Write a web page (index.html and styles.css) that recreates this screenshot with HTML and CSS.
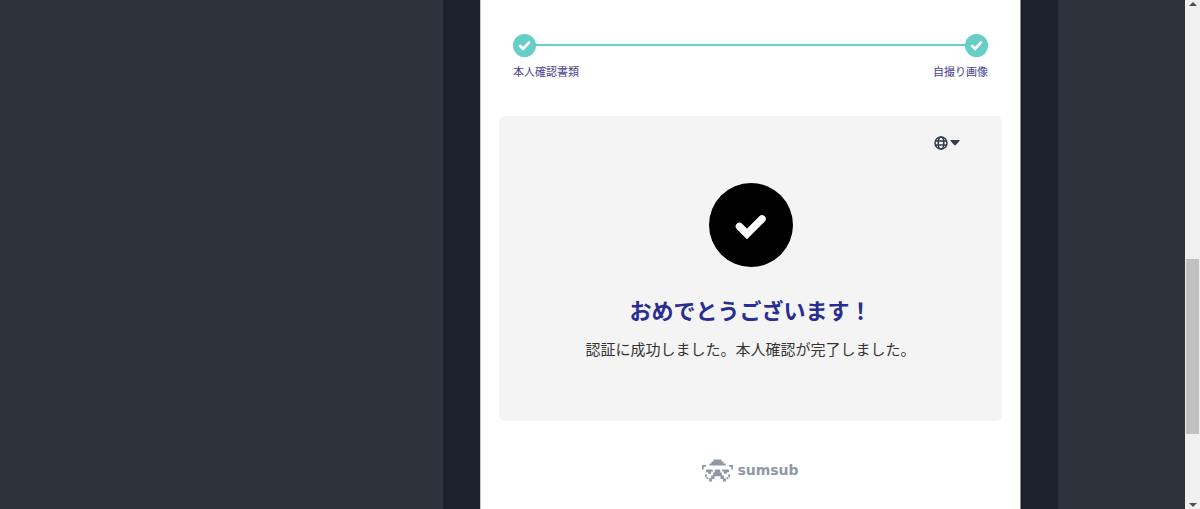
FILE: index.html
```html
<!DOCTYPE html>
<html lang="ja">

<head>
    <meta charset="UTF-8">
    <meta name="viewport" content="width=device-width, initial-scale=1.0">
    <title>本人確認</title>
    <link rel="stylesheet" href="styles.css">
</head>

<body>
    <div class="page">
        <div class="frame">
            <main class="panel">
                <ol class="steps">
                    <li>
                        <svg class="dot" viewBox="0 0 24 24">
                            <circle cx="12" cy="12" r="12" />
                            <path d="M7.500 12.500l3 3 6-6.500" />
                        </svg>
                        <span>本人確認書類</span>
                    </li>
                    <li>
                        <svg class="dot" viewBox="0 0 24 24">
                            <circle cx="12" cy="12" r="12" />
                            <path d="M7.500 12.500l3 3 6-6.500" />
                        </svg>
                        <span>自撮り画像</span>
                    </li>
                </ol>

                <section class="card">
                    <button class="lang" type="button" aria-label="言語">
                        <svg class="globe" viewBox="0 0 14 14">
                            <circle cx="7" cy="7" r="6" />
                            <ellipse cx="7" cy="7" rx="2.800" ry="6" />
                            <path d="M1.300 5h11.400M1.300 9h11.400" />
                        </svg>
                        <svg class="caret" viewBox="0 0 10 6">
                            <path d="M1 0h8q1.200 0 .4 1L5.800 5q-.8.800-1.600 0L.6 1Q-.2 0 1 0z" />
                        </svg>
                    </button>
                    <svg class="result" viewBox="0 0 84 84">
                        <circle cx="42" cy="42" r="42" />
                        <path d="M30.500 43.500l7.500 7.500 15-15" />
                    </svg>
                    <h1>おめでとうございます！</h1>
                    <p>認証に成功しました。本人確認が完了しました。</p>
                </section>

                <footer class="brand">
                    <svg viewBox="0 0 92 68">
                        <path d="M34 1h24v6h6v6h6v6H22v-6h6V7h6z" />
                        <path d="M0 18h12v5H5v8H0zM92 18H80v5h7v8h5z" />
                        <path d="M12 31h20v6h-5v7h-9v-5h-6zM80 31H60v6h5v7h9v-5h6z" />
                        <path d="M38 31h16v9h5v9h6v8h6v10h-9v-8h-7v-8H37v8h-7v8h-9V57h6v-8h6v-9h5z" />
                        <path d="M9 45h5v8h5v7h-5v-6H9zM83 45h-5v8h-5v7h5v-6h5z" />
                    </svg>
                    <span>sumsub</span>
                </footer>
            </main>
        </div>
        <div class="scrollbar">
            <i class="arrow up"></i>
            <div class="track">
                <div class="thumb"></div>
            </div>
            <i class="arrow down"></i>
        </div>
    </div>
</body>

</html>
```
FILE: styles.css
```css
* {
    margin: 0;
    padding: 0;
    box-sizing: border-box;
}

body {
    background: #2e323b;
    color: #333;
    font-family: "Noto Sans CJK JP", sans-serif;
}

.page {
    display: flex;
    justify-content: flex-end;
    min-height: 100vh;
}

.frame {
    flex: 0 1 615px;
    margin-right: 127px;
    padding: 0 37px;
    background: #1b222c;
}

.panel {
    min-height: 100%;
    padding: 34px 18px 24px;
    background: #fff;
    border-left: 1px solid #c8c8ca;
    border-right: 1px solid #8b8b8f;
}

/* steps */

.steps {
    display: flex;
    justify-content: space-between;
    margin: 0 14px 36px;
    list-style: none;
    background: linear-gradient(#65cec6, #65cec6) 0 10px / 100% 2px no-repeat;
}

.steps li {
    display: flex;
    flex-direction: column;
    gap: 6px;
    color: #494391;
    font-size: 11px;
    line-height: 17px;
}

.steps li:last-child {
    align-items: flex-end;
}

.dot {
    width: 23px;
    height: 23px;
    fill: #65cec6;
}

.dot path {
    fill: none;
    stroke: #fff;
    stroke-width: 3;
    stroke-linecap: round;
    stroke-linejoin: round;
}

/* card */

.card {
    display: flex;
    flex-direction: column;
    align-items: center;
    padding: 19px 42px 60px;
    background: #f4f4f4;
    border-radius: 6px;
    text-align: center;
}

.lang {
    display: flex;
    align-items: center;
    align-self: flex-end;
    gap: 2px;
    height: 16px;
    margin-bottom: 32px;
    border: 0;
    background: none;
    cursor: pointer;
}

.globe {
    width: 14px;
    height: 14px;
    fill: none;
    stroke: #343c50;
    stroke-width: 1.5;
}

.caret {
    width: 10px;
    height: 6px;
    fill: #343c50;
}

.result {
    width: 84px;
    height: 84px;
    margin-bottom: 26px;
}

.result path {
    fill: none;
    stroke: #fff;
    stroke-width: 7.5;
    stroke-linecap: round;
}

.card h1 {
    margin-bottom: 12px;
    color: #292d91;
    font-size: 22px;
    line-height: 32px;
}

.card p {
    font-size: 15px;
    line-height: 24px;
}

/* footer */

.brand {
    display: flex;
    justify-content: center;
    align-items: center;
    gap: 4px;
    margin-top: 36px;
    color: #9297a5;
    font: bold 14px/26px "DejaVu Sans", sans-serif;
}

.brand svg {
    width: 31px;
    height: 23px;
    fill: #9297a5;
}

/* scrollbar */

.scrollbar {
    display: flex;
    flex: 0 0 15px;
    flex-direction: column;
    align-items: center;
    padding: 2px 0;
    background: #f0f0f0;
}

.arrow {
    border: 4px solid transparent;
}

.up {
    border-top: 0;
    border-bottom-color: #505050;
}

.down {
    border-bottom: 0;
    border-top-color: #505050;
}

.track {
    display: flex;
    flex: 1;
    flex-direction: column;
    justify-content: flex-end;
    width: 13px;
    padding-bottom: 69px;
}

.thumb {
    height: 41%;
    background: #c1c1c1;
}
```
